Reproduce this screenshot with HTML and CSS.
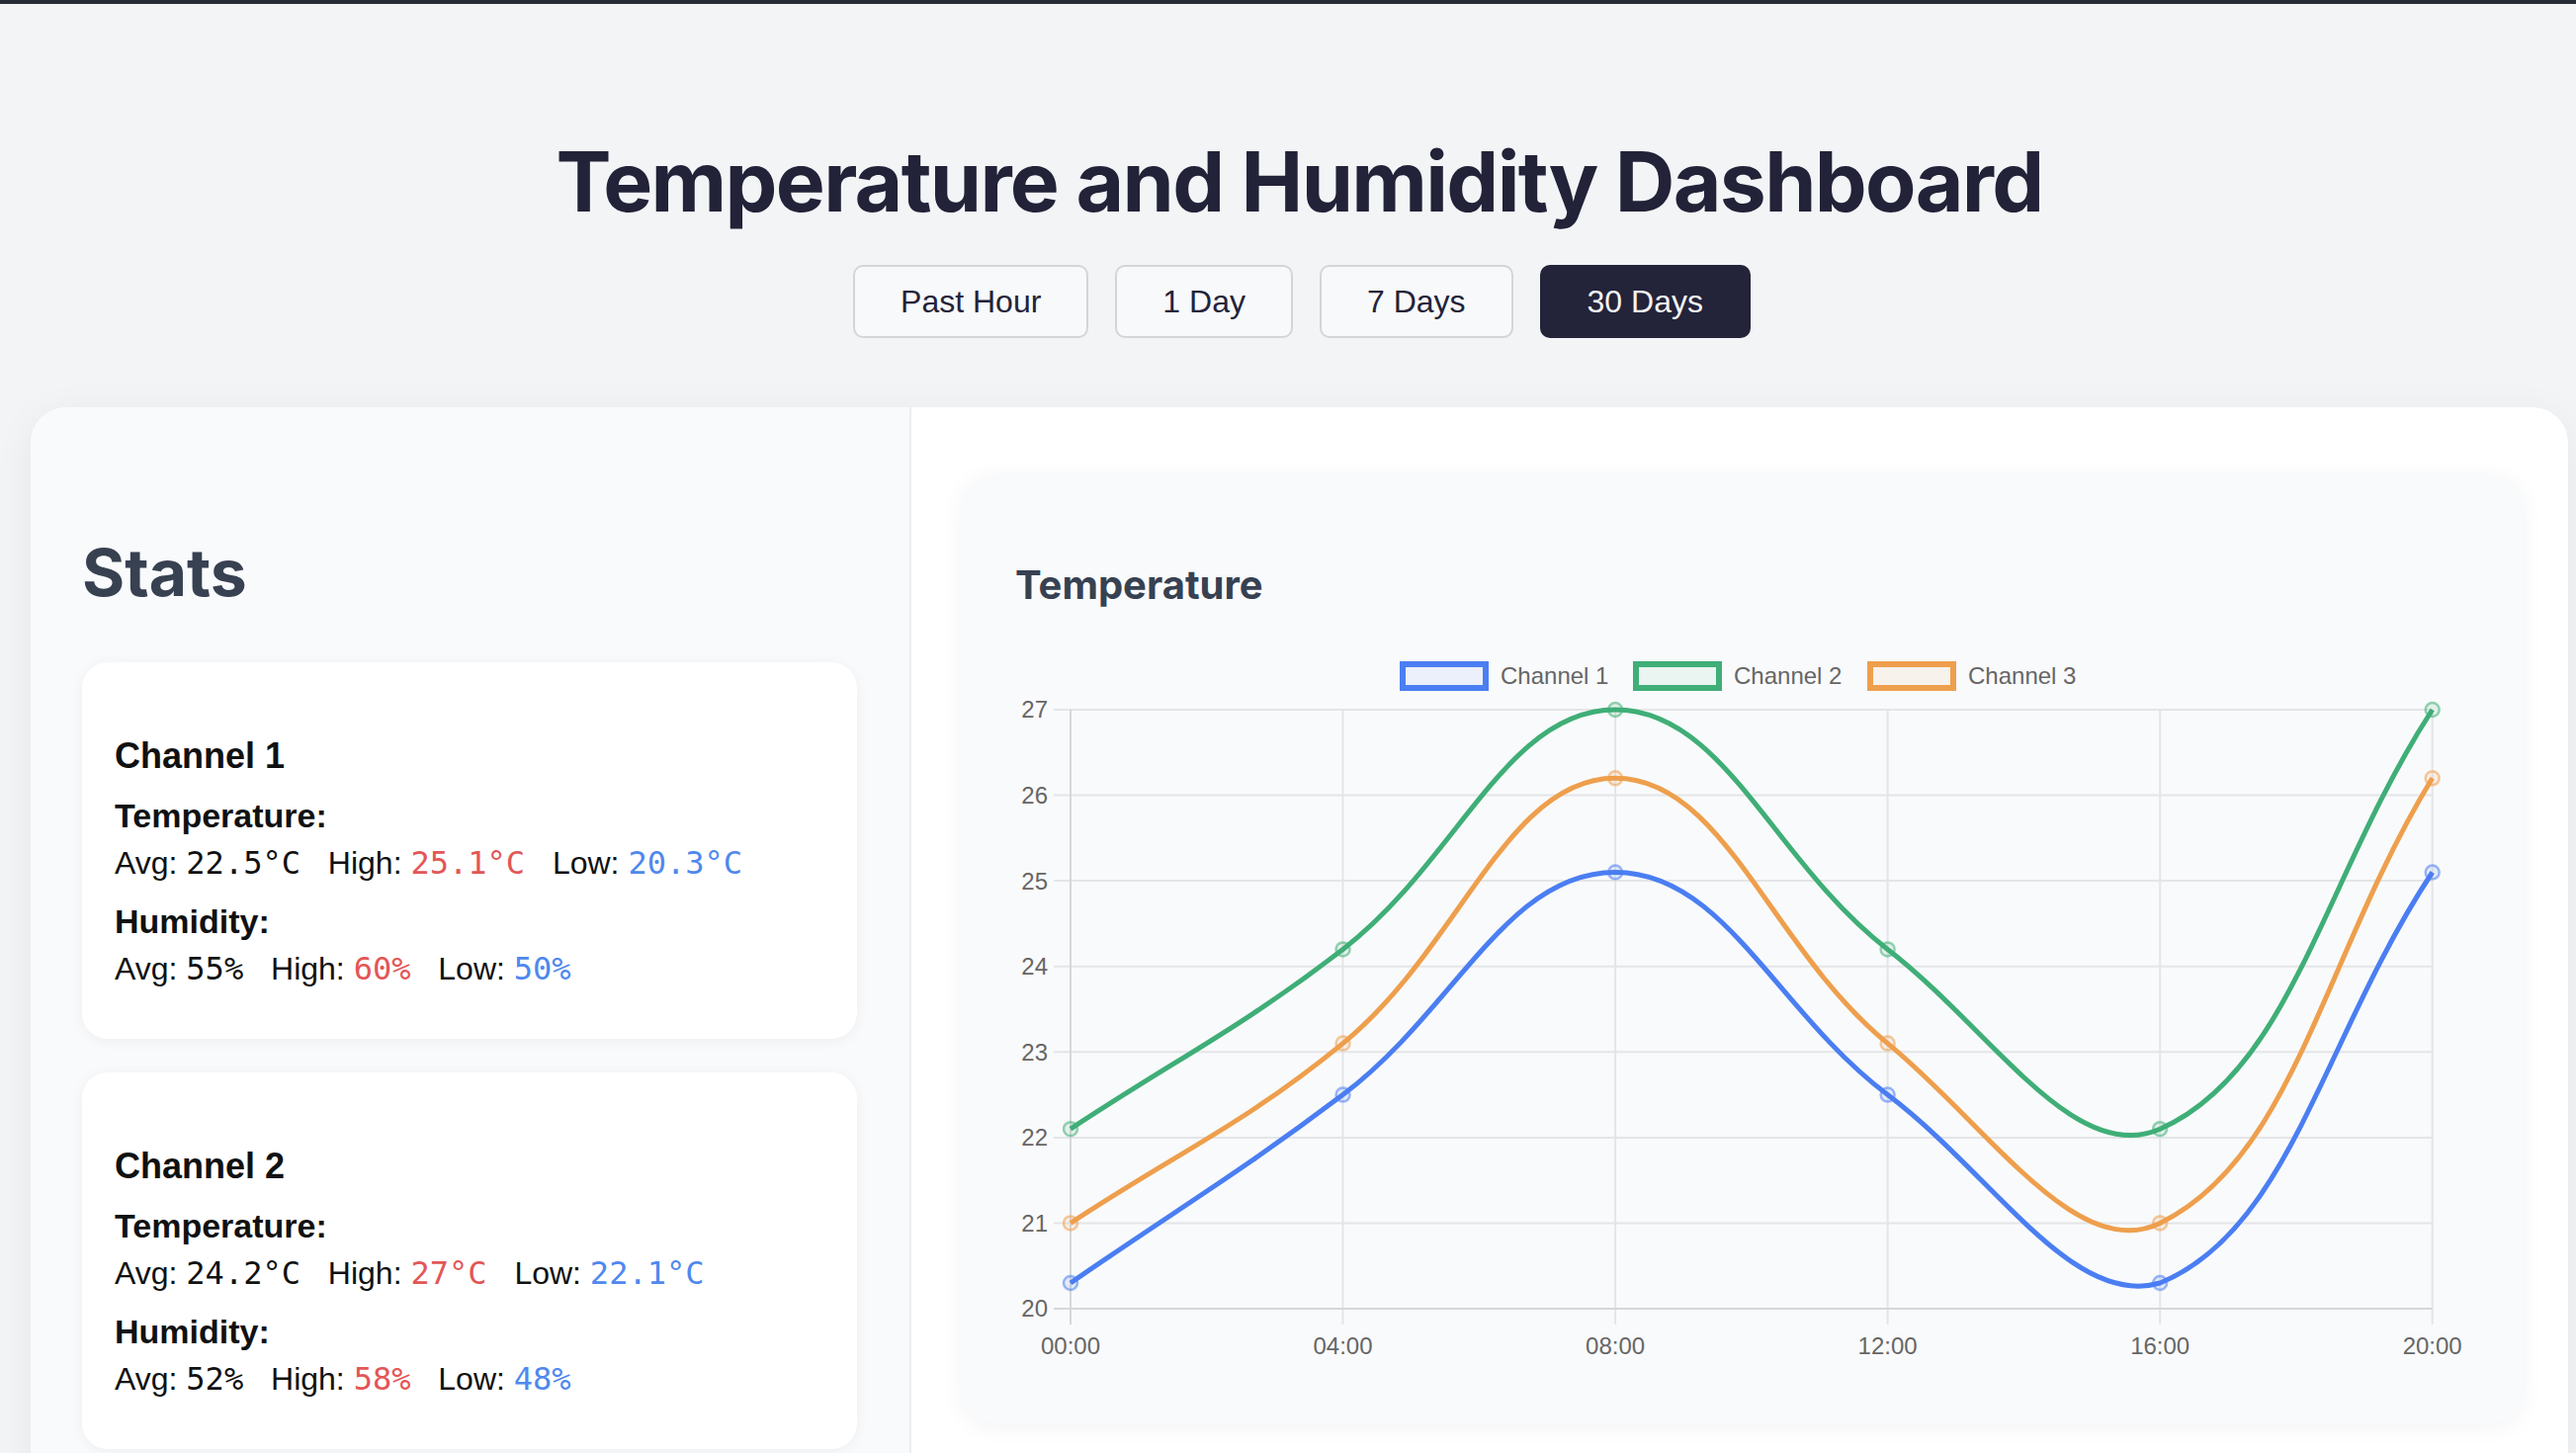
FILE: index.html
```html
<!DOCTYPE html>
<html lang="en">
<head>
<meta charset="utf-8">
<title>Temperature and Humidity Dashboard</title>
<link rel="stylesheet" href="styles.css">
</head>
<body>
<div class="topbar"></div>
<div class="page">
  <h1 class="title">Temperature and Humidity Dashboard</h1>
  <div class="ranges">
    <button class="range">Past Hour</button>
    <button class="range">1 Day</button>
    <button class="range">7 Days</button>
    <button class="range active">30 Days</button>
  </div>

  <div class="dash">
    <section class="stats">
      <h2 class="stats-title">Stats</h2>

      <div class="card">
        <h3 class="card-title">Channel 1</h3>
        <h4 class="metric">Temperature:</h4>
        <p class="values"><span class="stat">Avg: <span class="num">22.5°C</span></span> <span class="stat">High: <span class="num high">25.1°C</span></span> <span class="stat">Low: <span class="num low">20.3°C</span></span></p>
        <h4 class="metric">Humidity:</h4>
        <p class="values last"><span class="stat">Avg: <span class="num">55%</span></span> <span class="stat">High: <span class="num high">60%</span></span> <span class="stat">Low: <span class="num low">50%</span></span></p>
      </div>

      <div class="card">
        <h3 class="card-title">Channel 2</h3>
        <h4 class="metric">Temperature:</h4>
        <p class="values"><span class="stat">Avg: <span class="num">24.2°C</span></span> <span class="stat">High: <span class="num high">27°C</span></span> <span class="stat">Low: <span class="num low">22.1°C</span></span></p>
        <h4 class="metric">Humidity:</h4>
        <p class="values last"><span class="stat">Avg: <span class="num">52%</span></span> <span class="stat">High: <span class="num high">58%</span></span> <span class="stat">Low: <span class="num low">48%</span></span></p>
      </div>
    </section>

    <section class="charts">
      <div class="chart-panel">
        <h3 class="chart-title">Temperature</h3>
        <svg class="chart" width="1478" height="740" viewBox="0 0 1478 740" xmlns="http://www.w3.org/2000/svg">
          <g class="legend">
            <rect x="392" y="22" width="84" height="24" fill="rgba(74,126,242,0.08)" stroke="#4a7ef2" stroke-width="6"/>
            <text x="491" y="34" dy=".35em">Channel 1</text>
            <rect x="628" y="22" width="84" height="24" fill="rgba(63,174,119,0.08)" stroke="#3fae77" stroke-width="6"/>
            <text x="727" y="34" dy=".35em">Channel 2</text>
            <rect x="865" y="22" width="84" height="24" fill="rgba(238,159,77,0.08)" stroke="#ee9f4d" stroke-width="6"/>
            <text x="964" y="34" dy=".35em">Channel 3</text>
          </g>
          <g class="grid">
            <line x1="39" y1="68" x2="1433.7" y2="68"/>
            <line x1="39" y1="154.6" x2="1433.7" y2="154.6"/>
            <line x1="39" y1="241.1" x2="1433.7" y2="241.1"/>
            <line x1="39" y1="327.7" x2="1433.7" y2="327.7"/>
            <line x1="39" y1="414.3" x2="1433.7" y2="414.3"/>
            <line x1="39" y1="500.9" x2="1433.7" y2="500.9"/>
            <line x1="39" y1="587.4" x2="1433.7" y2="587.4"/>
            <line x1="331.5" y1="68" x2="331.5" y2="690"/>
            <line x1="607.1" y1="68" x2="607.1" y2="690"/>
            <line x1="882.6" y1="68" x2="882.6" y2="690"/>
            <line x1="1158.2" y1="68" x2="1158.2" y2="690"/>
            <line x1="1433.7" y1="68" x2="1433.7" y2="690"/>
          </g>
          <g class="axis">
            <line x1="39" y1="674" x2="1433.7" y2="674"/>
            <line x1="56" y1="68" x2="56" y2="690"/>
          </g>
          <g class="ylabels">
            <text x="33" y="68" dy=".35em">27</text>
            <text x="33" y="154.6" dy=".35em">26</text>
            <text x="33" y="241.1" dy=".35em">25</text>
            <text x="33" y="327.7" dy=".35em">24</text>
            <text x="33" y="414.3" dy=".35em">23</text>
            <text x="33" y="500.9" dy=".35em">22</text>
            <text x="33" y="587.4" dy=".35em">21</text>
            <text x="33" y="674" dy=".35em">20</text>
          </g>
          <g class="xlabels">
            <text x="56" y="712" dy=".35em">00:00</text>
            <text x="331.5" y="712" dy=".35em">04:00</text>
            <text x="607.1" y="712" dy=".35em">08:00</text>
            <text x="882.6" y="712" dy=".35em">12:00</text>
            <text x="1158.2" y="712" dy=".35em">16:00</text>
            <text x="1433.7" y="712" dy=".35em">20:00</text>
          </g>

          <g class="series orange">
            <path d="M56,587.4 C166.22,514.68 229.72,488.76 331.54,405.6 C450.15,308.72 496.86,137.3 607.08,137.3 C717.3,137.3 764.01,308.72 882.62,405.6 C984.44,488.76 1073.34,628.7 1158.16,587.4 C1293.77,521.38 1323.48,317.34 1433.7,137.3"/>
            <circle cx="56" cy="587.4" r="7"/><circle cx="331.54" cy="405.6" r="7"/><circle cx="607.08" cy="137.3" r="7"/><circle cx="882.62" cy="405.6" r="7"/><circle cx="1158.16" cy="587.4" r="7"/><circle cx="1433.7" cy="137.3" r="7"/>
          </g>
          <g class="series green">
            <path d="M56,492.2 C166.22,419.48 227.16,390.74 331.54,310.4 C447.6,221.06 496.86,68 607.08,68 C717.3,68 766.56,221.06 882.62,310.4 C987,390.74 1071.11,530.49 1158.16,492.2 C1291.54,433.53 1323.48,237.68 1433.7,68"/>
            <circle cx="56" cy="492.2" r="7"/><circle cx="331.54" cy="310.4" r="7"/><circle cx="607.08" cy="68" r="7"/><circle cx="882.62" cy="310.4" r="7"/><circle cx="1158.16" cy="492.2" r="7"/><circle cx="1433.7" cy="68" r="7"/>
          </g>
          <g class="series blue">
            <path d="M56,648 C166.2,571.8 224.65,538.19 331.54,457.6 C445.08,371.99 496.86,232.5 607.08,232.5 C717.3,232.5 769.08,371.99 882.62,457.6 C989.51,538.19 1069.59,674 1158.16,648 C1290.02,594.14 1323.48,398.7 1433.7,232.5"/>
            <circle cx="56" cy="648" r="7"/><circle cx="331.54" cy="457.6" r="7"/><circle cx="607.08" cy="232.5" r="7"/><circle cx="882.62" cy="457.6" r="7"/><circle cx="1158.16" cy="648" r="7"/><circle cx="1433.7" cy="232.5" r="7"/>
          </g>
        </svg>
      </div>
    </section>
  </div>
</div>
</body>
</html>
```

FILE: styles.css
```css
html {
  overflow: hidden;
}

body {
  margin: 0;
  background: #f3f4f6;
  font-family: "Liberation Sans", Arial, sans-serif;
  color: #111;
}

.topbar {
  height: 4px;
  background: #272c34;
}

.page {
  margin: 0 8px 0 31px;
}

.title {
  margin: 130px 0 0;
  text-align: center;
  font-family: Inter, "Liberation Sans", sans-serif;
  font-weight: 700;
  font-size: 84px;
  line-height: 100px;
  letter-spacing: -0.02em;
  color: #222238;
}

.ranges {
  display: flex;
  justify-content: center;
  gap: 27px;
  margin-top: 34px;
  padding-left: 5px;
}

.range {
  height: 74px;
  padding: 0 46px;
  font-family: "Liberation Sans", Arial, sans-serif;
  font-size: 32px;
  color: #232339;
  background: #f8f9fa;
  border: 2px solid #d3d5d9;
  border-radius: 10px;
}

.range.active {
  background: #232339;
  border-color: #232339;
  color: #f3f4f6;
}

.dash {
  margin-top: 70px;
  display: grid;
  grid-template-columns: 891px 1fr;
  background: #fff;
  border-radius: 36px;
  box-shadow: 0 8px 40px rgba(0, 0, 0, 0.06);
  overflow: hidden;
}

.stats {
  box-sizing: border-box;
  background: #f9fafb;
  padding: 52px 53px 52px 52px;
  border-right: 2px solid #eceef1;
}

.stats-title {
  margin: 77px 0 52px;
  font-family: Inter, "Liberation Sans", sans-serif;
  font-weight: 700;
  font-size: 66px;
  line-height: 77px;
  color: #374151;
}

.card {
  background: #fff;
  border-radius: 26px;
  padding: 71px 34px 47px 33px;
  margin-bottom: 34px;
  box-shadow: 0 2px 14px rgba(0, 0, 0, 0.05);
}

.card-title {
  margin: 0 0 12px;
  font-size: 36px;
  line-height: 48px;
  font-weight: 700;
  color: #111;
}

.metric {
  margin: 0;
  font-size: 34px;
  line-height: 48px;
  font-weight: 700;
  color: #111;
}

.values {
  margin: 0 0 11px;
  font-size: 32px;
  line-height: 48px;
  color: #111;
}

.values.last {
  margin-bottom: 0;
}

.stat {
  margin-right: 19px;
}

.num {
  font-family: "DejaVu Sans Mono", "Liberation Mono", monospace;
  font-size: 32px;
}

.num.high {
  color: #e35656;
}

.num.low {
  color: #4f88ee;
}

.charts {
  padding: 68px 46px 40px 51px;
}

.chart-panel {
  background: #f9fafb;
  border-radius: 32px;
  padding: 88px 47px 50px 54px;
  box-shadow: 0 4px 24px rgba(0, 0, 0, 0.05);
}

.chart-title {
  margin: 0 0 34px;
  font-family: Inter, "Liberation Sans", sans-serif;
  font-weight: 700;
  font-size: 40px;
  line-height: 48px;
  color: #374151;
}

.chart {
  display: block;
  font-family: "Liberation Sans", Arial, sans-serif;
}

.legend text {
  font-size: 24px;
  fill: #666;
}

.grid line {
  stroke: #e4e5e7;
  stroke-width: 2;
}

.axis line {
  stroke: #d6d7d9;
  stroke-width: 2;
}

.ylabels text {
  font-size: 24px;
  fill: #666;
  text-anchor: end;
}

.xlabels text {
  font-size: 24px;
  fill: #666;
  text-anchor: middle;
}

.series path {
  fill: none;
  stroke-width: 5;
}

.series circle {
  stroke-width: 2.5;
}

.series.blue path { stroke: #4a7ef2; }
.series.blue circle { stroke: rgba(74, 126, 242, 0.55); fill: rgba(74, 126, 242, 0.12); }

.series.green path { stroke: #3fae77; }
.series.green circle { stroke: rgba(63, 174, 119, 0.55); fill: rgba(63, 174, 119, 0.12); }

.series.orange path { stroke: #ee9f4d; }
.series.orange circle { stroke: rgba(238, 159, 77, 0.55); fill: rgba(238, 159, 77, 0.12); }
```
